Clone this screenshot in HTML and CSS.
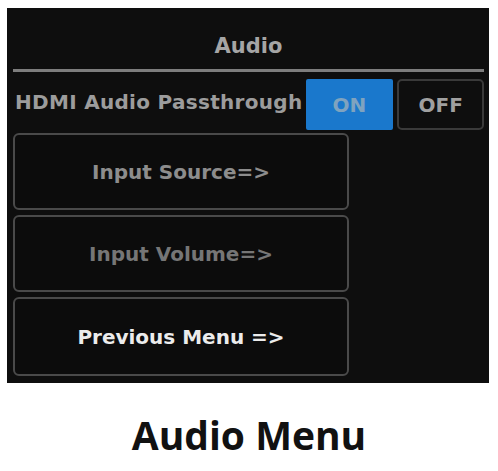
FILE: index.html
```html
<!DOCTYPE html>
<html lang="en">
<head>
    <meta charset="UTF-8">
    <title>Audio Menu</title>
    <link rel="stylesheet" href="styles.css">
</head>
<body>
    <div class="screen">
        <div class="screen-title">Audio</div>
        <div class="divider"></div>

        <div class="option-row">
            <span class="option-label">HDMI Audio Passthrough</span>
            <button class="toggle active">ON</button>
            <button class="toggle">OFF</button>
        </div>

        <div class="menu-list">
            <button class="menu-item">Input Source=&gt;</button>
            <button class="menu-item dim">Input Volume=&gt;</button>
            <button class="menu-item bright">Previous Menu =&gt;</button>
        </div>
    </div>

    <h1 class="caption">Audio Menu</h1>
</body>
</html>
```

FILE: styles.css
```css
body {
    margin: 0;
    padding: 8px 0 0 7px;
    background: #ffffff;
    font-family: 'DejaVu Sans', Verdana, sans-serif;
}

.screen {
    width: 482px;
    height: 375px;
    box-sizing: border-box;
    padding: 0 5px 0 6px;
    background: #0e0e0e;
    display: flex;
    flex-direction: column;
}

.screen-title {
    height: 61px;
    line-height: 76px;
    text-align: center;
    font-size: 21px;
    font-weight: bold;
    color: #a5a5a5;
    box-sizing: border-box;
    padding-bottom: 16px;
}

.divider {
    height: 3px;
    background: #7d7d7d;
}

.option-row {
    display: flex;
    align-items: stretch;
    height: 51px;
    margin-top: 7px;
}

.option-label {
    width: 292px;
    padding-left: 2px;
    font-size: 20px;
    font-weight: bold;
    color: #9c9c9c;
    line-height: 47px;
    white-space: nowrap;
    letter-spacing: 0.3px;
}

.toggle {
    width: 88px;
    margin: 0;
    border: 2px solid #3a3a3a;
    border-radius: 5px;
    background: #0e0e0e;
    color: #a0a0a0;
    font-family: inherit;
    font-size: 20px;
    font-weight: bold;
}

.toggle.active {
    border-color: #1a78cc;
    border-radius: 2px;
    background: #1a78cc;
    color: #7fa3bf;
}

.toggle + .toggle {
    margin-left: 4px;
    width: 87px;
}

.menu-list {
    display: flex;
    flex-direction: column;
    gap: 5px;
    width: 336px;
    margin-top: 3px;
}

.menu-item {
    height: 77px;
    margin: 0;
    border: 2px solid #4a4a4a;
    border-radius: 6px;
    background: #0c0c0c;
    color: #8d8d8d;
    font-family: inherit;
    font-size: 20px;
    font-weight: bold;
}

.menu-item.dim {
    color: #767676;
}

.menu-item.bright {
    height: 79px;
    color: #ececec;
}

.caption {
    margin: 25px 0 0 -7px;
    text-align: center;
    font-family: 'Open Sans', Lato, sans-serif;
    font-size: 39px;
    font-weight: bold;
    color: #111111;
}
```
